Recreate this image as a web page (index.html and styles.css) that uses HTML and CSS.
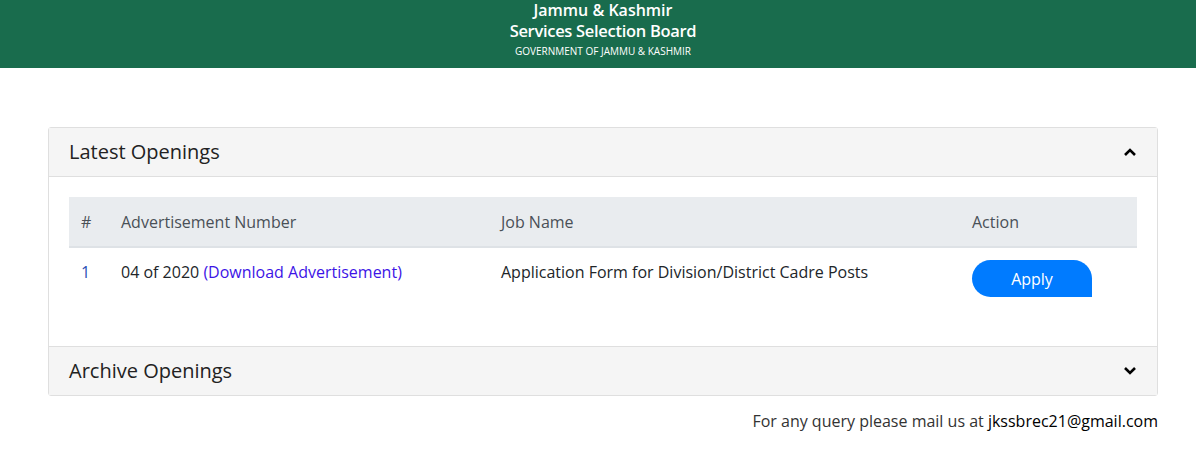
FILE: index.html
```html
<!DOCTYPE html>
<html lang="en">
<head>
  <meta charset="UTF-8">
  <meta name="viewport" content="width=device-width, initial-scale=1.0">
  <title>JKSSB - Openings</title>
  <link rel="stylesheet" href="styles.css">
</head>
<body>
  <header class="top-bar">
    <div class="brand">
      <div class="brand-line1">Jammu &amp; Kashmir</div>
      <div class="brand-line2">Services Selection Board</div>
      <div class="brand-line3">GOVERNMENT OF JAMMU &amp; KASHMIR</div>
    </div>
  </header>

  <div class="container">
    <div class="card">
      <div class="card-header">
        <span>Latest Openings</span>
        <svg class="chevron" width="14" height="10" viewBox="0 0 14 10"><path d="M2 8 L7 3 L12 8" fill="none" stroke="#000" stroke-width="2.6"/></svg>
      </div>
      <div class="card-body">
        <table class="jobs">
          <thead>
            <tr>
              <th class="col-no">#</th>
              <th class="col-adv">Advertisement Number</th>
              <th class="col-job">Job Name</th>
              <th>Action</th>
            </tr>
          </thead>
          <tbody>
            <tr>
              <td class="num">1</td>
              <td>04 of 2020 <a href="#">(Download Advertisement)</a></td>
              <td>Application Form for Division/District Cadre Posts</td>
              <td><button class="apply-btn">Apply</button></td>
            </tr>
          </tbody>
        </table>
      </div>
      <div class="card-header last">
        <span>Archive Openings</span>
        <svg class="chevron" width="14" height="10" viewBox="0 0 14 10"><path d="M2 2 L7 7 L12 2" fill="none" stroke="#000" stroke-width="2.6"/></svg>
      </div>
    </div>

    <p class="query">For any query please mail us at <span class="mail">jkssbrec21@gmail.com</span></p>
  </div>
</body>
</html>
```

FILE: styles.css
```css
* {
  margin: 0;
  padding: 0;
  box-sizing: border-box;
}

body {
  font-family: 'Open Sans', sans-serif;
  font-size: 16px;
  line-height: 1.5;
  color: #212529;
  background: #fff;
}

.top-bar {
  background: #196c4d;
  height: 68px;
  display: flex;
  justify-content: center;
  padding-left: 10px;
  color: #fff;
}

.brand {
  text-align: center;
  padding-top: 1px;
}

.brand-line1 {
  font-weight: 600;
  font-size: 16px;
  line-height: 19px;
}

.brand-line2 {
  font-weight: 600;
  font-size: 16.5px;
  line-height: 21px;
  letter-spacing: -0.3px;
}

.brand-line3 {
  font-size: 10px;
  line-height: 20px;
  font-weight: 400;
}

.container {
  width: 1140px;
  margin-left: 33px;
  padding: 59px 15px 0;
}

.card {
  border: 1px solid #dfdfdf;
  border-radius: 3px;
}

.card-header {
  background: #f5f5f5;
  height: 49px;
  padding: 0 20px;
  display: flex;
  align-items: center;
  justify-content: space-between;
  font-size: 20px;
  color: #222;
  border-bottom: 1px solid #dfdfdf;
}

.card-header.last {
  border-bottom: none;
  border-top: 1px solid #dfdfdf;
  height: 49px;
}

.card-body {
  padding: 20px 20px 24px;
  height: 169px;
}

.jobs {
  width: 100%;
  border-collapse: collapse;
  font-size: 16px;
}

.jobs th {
  background: #e9ecef;
  color: #495057;
  font-weight: 400;
  text-align: left;
  padding: 12px;
  height: 50px;
  border-bottom: 2px solid #dee2e6;
}

.jobs td {
  padding: 12px;
  vertical-align: top;
}

.col-no {
  width: 40px;
}

.col-adv {
  width: 380px;
}

.col-job {
  width: 471px;
}

.num {
  color: #2a4fb5;
}

.jobs a {
  color: #3d14e6;
  text-decoration: none;
}

.apply-btn {
  font-family: 'Open Sans', sans-serif;
  background: #007bff;
  color: #fff;
  border: none;
  width: 120px;
  height: 37px;
  font-size: 16px;
  border-radius: 19px 19px 0 19px;
  cursor: pointer;
}

.query {
  text-align: right;
  font-size: 16px;
  margin-top: 13px;
  color: #333;
}

.mail {
  color: #000;
}
```
